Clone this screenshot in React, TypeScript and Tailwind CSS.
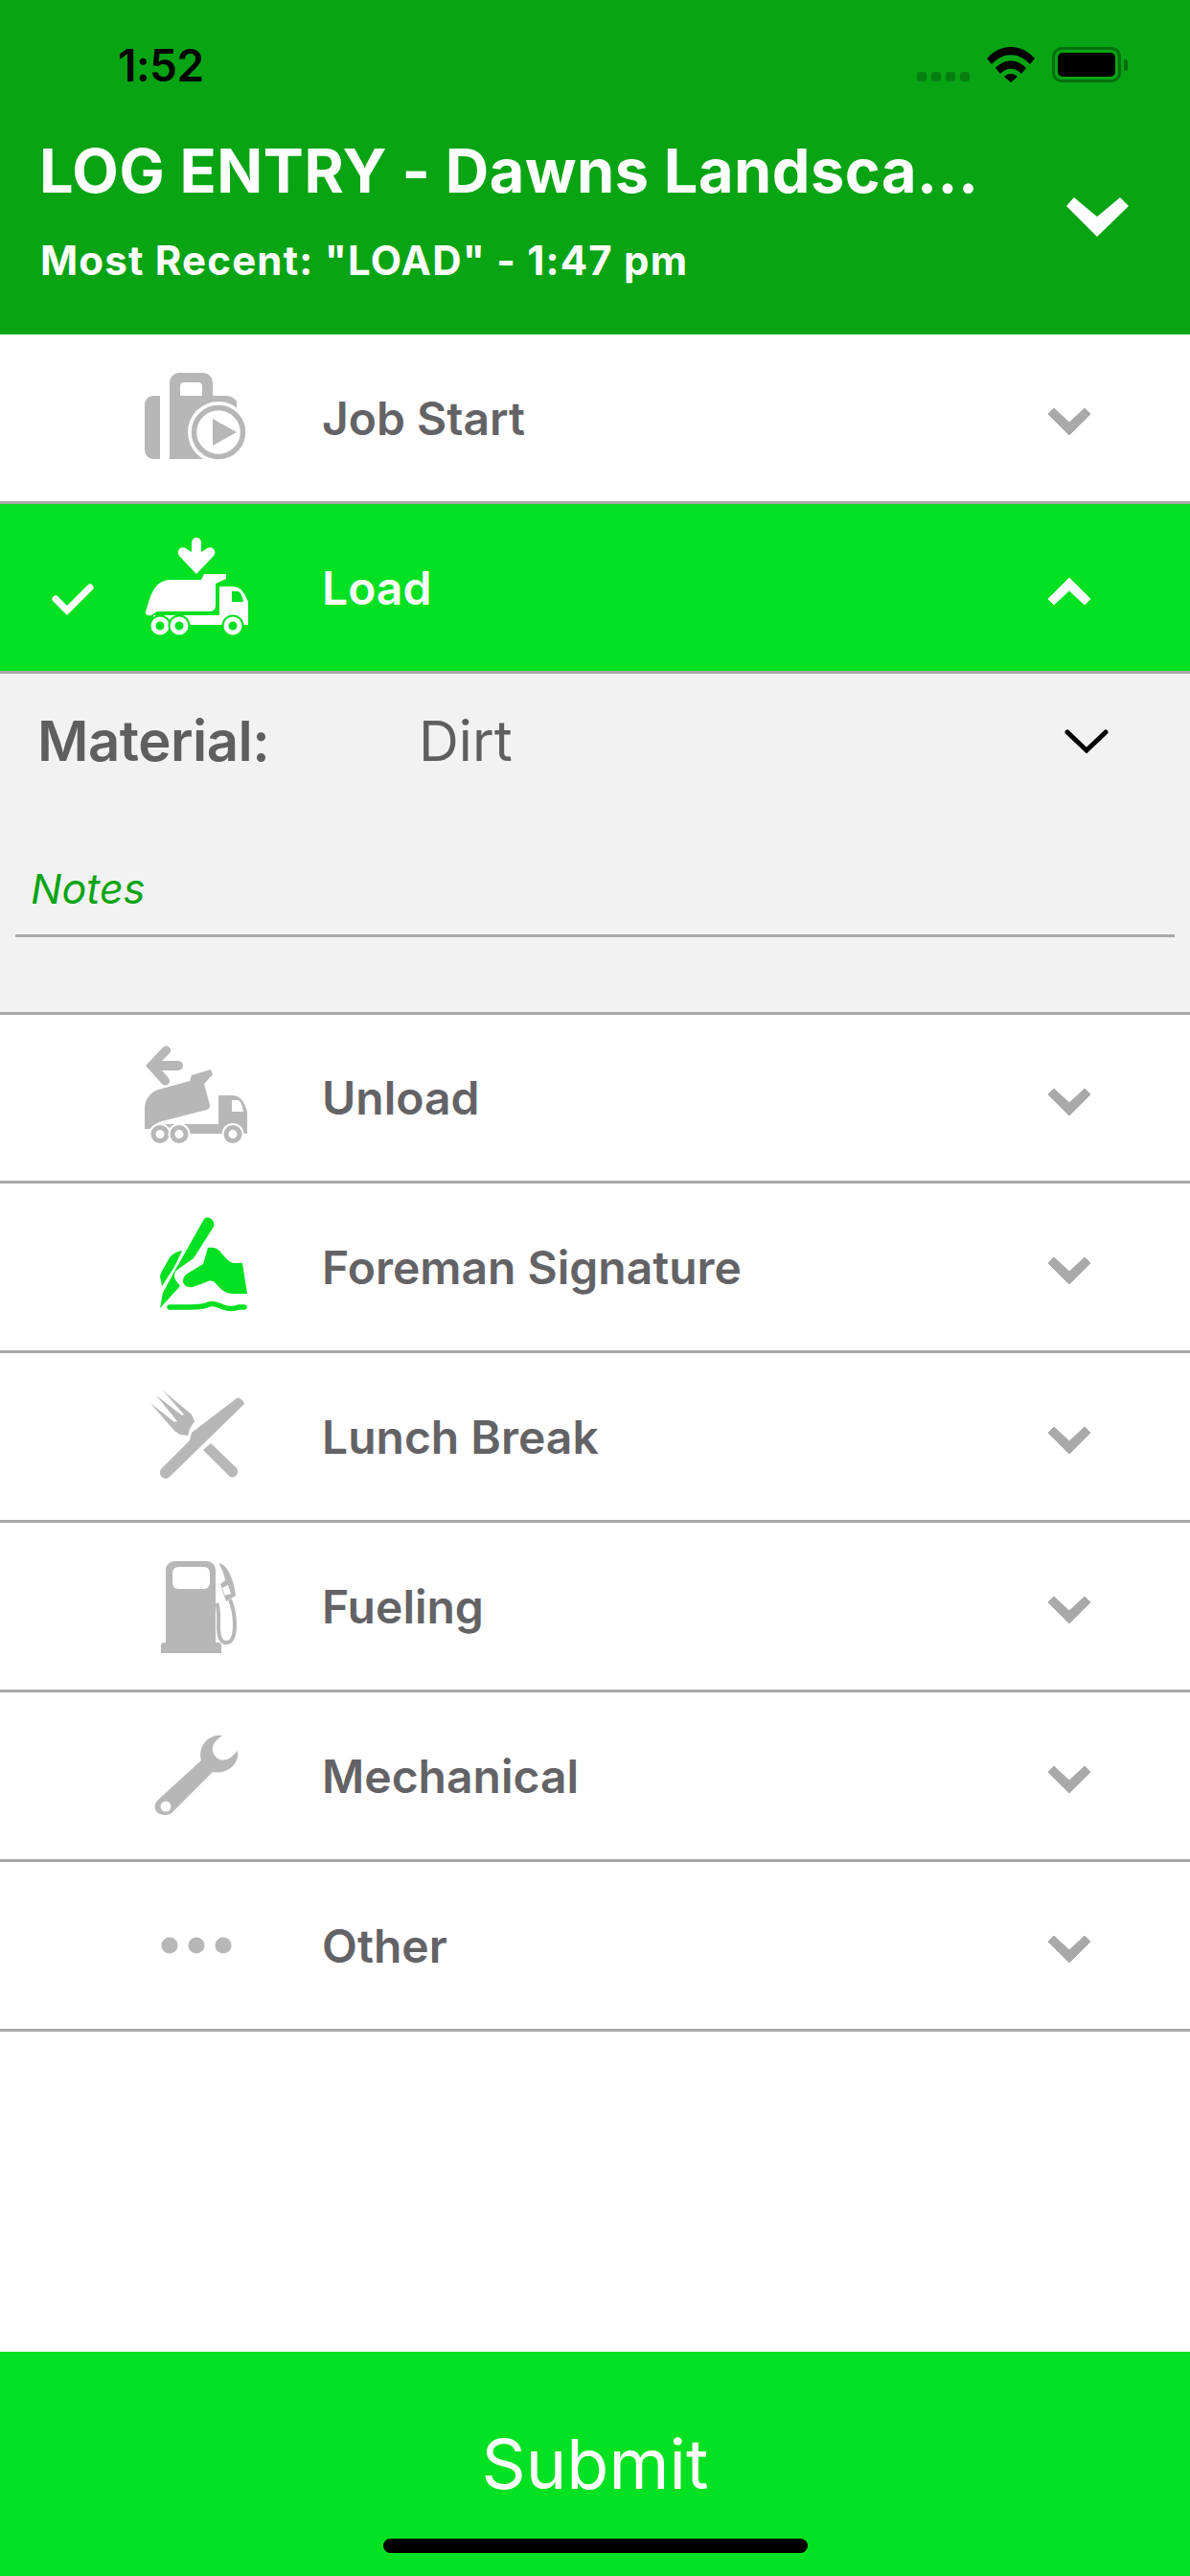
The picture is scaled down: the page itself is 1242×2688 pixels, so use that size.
const font = "font-['Inter','Noto_Sans',sans-serif]";

const GRAY = "#b7b7b7";
const GREEN = "#04e022";

type IconProps = { color?: string; cut?: string };

const Box = ({ children }: { children: React.ReactNode }) => (
  <svg viewBox="0 0 160 177" className="absolute left-[120px] top-0 h-[177px] w-[160px]">
    {children}
  </svg>
);

const JobIcon = () => (
  <Box>
    <path d="M40 64h7v66h-7a9 9 0 0 1-9-9V73a9 9 0 0 1 9-9z" fill={GRAY} />
    <path
      d="M57 130V50a10 10 0 0 1 10-10h25a10 10 0 0 1 10 10v14h14c6 0 9 3 11 6v40l-35 20z"
      fill={GRAY}
    />
    <path d="M68 64V54a4 4 0 0 1 4-4h15a4 4 0 0 1 4 4v10z" fill="#fff" />
    <circle cx="108" cy="102" r="32" fill="#fff" />
    <path d="M127 70l10 32h10V60z" fill="#fff" />
    <circle cx="108" cy="102" r="25.500" fill="none" stroke={GRAY} strokeWidth="5.500" />
    <path d="M102 88l25 14-25 14z" fill={GRAY} />
  </Box>
);

const Wheels = ({ y, color, cut }: { y: number; color: string; cut: string }) => (
  <>
    {[47, 67, 123].map((x) => (
      <g key={x}>
        <circle cx={x} cy={y} r="11.500" fill={cut} />
        <circle cx={x} cy={y} r="7" fill="none" stroke={color} strokeWidth="5" />
      </g>
    ))}
  </>
);

const LoadIcon = ({ color = "#fff", cut = GREEN }: IconProps) => (
  <Box>
    <path
      d="M80 40a5 5 0 0 1 10 0v10l5-3a5 5 0 0 1 8 7L85 73 67 54a5 5 0 0 1 8-7l5 3z"
      fill={color}
    />
    <path
      d="M32 113c4-14 8-34 26-34h32l3-6h23v5l-11 5v23c0 3-2 6-6 6H46c-3 0-5 2-8 4-3 1-7-1-6-3z"
      fill={color}
    />
    <path d="M109 86h14c8 0 12 6 16 16v24H40v-10h69z" fill={color} />
    <path d="M122 91h6c3 0 5 5 6 11h-12z" fill={cut} />
    <Wheels y={127} color={color} cut={cut} />
  </Box>
);

const UnloadIcon = ({ color = GRAY, cut = "#fff" }: IconProps) => (
  <Box>
    <path
      d="M32 53l18-19a4.500 4.500 0 0 1 7 6l-8 8h17a5 5 0 0 1 0 10H49l7 8a4.500 4.500 0 0 1-7 6z"
      fill={color}
    />
    <path
      d="M31 119V98c0-10 6-17 14-20l33-9 2-6 20-6 2 5-9 10 6 22c0 3-1 4-3 5L49 111c-5 1-8 4-12 8z"
      fill={color}
    />
    <path d="M108 84h14c8 0 13 6 16 17v23H42v-4c0-4 3-6 8-6h58z" fill={color} />
    <path d="M122 89h6c3 0 5 6 6 12h-12z" fill={cut} />
    <Wheels y={124.500} color={color} cut={cut} />
  </Box>
);

const SignatureIcon = () => (
  <Box>
    <path d="M70 70c-6 1-12 4-15 11-4 7-8 13-8 16l2 10 13-20z" fill={GREEN} />
    <path
      d="M97 67c5-1 9 0 12 3 5 6 10 13 16 13h8l5 32h-15c-8 0-13-5-18-11-3-3-6-3-10-1l-14 5c-5 1-10-2-10-6 0-4 2-7 6-9l15-9z"
      fill={GREEN}
    />
    <path
      d="M93 37c4-4 12 1 10 8L82 78 65 90c-4 3-4 9 0 13l3 4-21 23 3-16 13-24z"
      fill={GREEN}
      stroke="#fff"
      strokeWidth="2.500"
      paintOrder="stroke"
    />
    <path
      d="M57 129h21c8 0 14 0 20-3 6-2 10 1 15 3 6 2 11 2 16 0h6"
      fill="none"
      stroke={GREEN}
      strokeWidth="5.500"
      strokeLinecap="round"
    />
  </Box>
);

const LunchIcon = () => (
  <Box>
    <path
      d="M127 47c3-1 7 2 8 6L57 129c-3 3-7 2-9-1-2-3-1-6 1-8l29-29 2-8z"
      fill={GRAY}
    />
    <path d="M92 101l8-7 27 26c2 3 1 6-1 8-2 2-5 2-7 0z" fill={GRAY} />
    <path
      d="M50 39l30 25 3 7-5 8-2 7-8-1-6-4-25-29 25 20 3-1-22-27 27 21 2-1z"
      fill={GRAY}
    />
  </Box>
);

const FuelIcon = () => (
  <Box>
    <path
      d="M62 40h34a9 9 0 0 1 9 9v76h3a3 3 0 0 1 3 3v8H48v-8a3 3 0 0 1 3-3h2V49a9 9 0 0 1 9-9z"
      fill={GRAY}
    />
    <rect x="60" y="46" width="39" height="23" rx="6" fill="#fff" />
    <path
      d="M106 84c3 6 2 14 2 24 0 8 1 17 8 17 7 0 9-8 9-19 0-9-2-18-5-26"
      fill="none"
      stroke={GRAY}
      strokeWidth="4"
    />
    <path d="M110 42c8 4 14 17 16 34l-10 6-6-18 5-4c-1-7-4-13-6-16z" fill={GRAY} />
    <path d="M112 68l6-3 3 9-6 2z" fill="#fff" />
  </Box>
);

const WrenchIcon = () => (
  <Box>
    <path
      d="M112 45c-14-2-26 11-22 26L45 112c-5 5-4 11 0 14 4 2 9 3 14 0l43-43c15 3 28-8 26-22l-6 6c-7 6-16 4-19-3-3-6-1-12 9-19z"
      fill={GRAY}
    />
    <circle cx="53" cy="119" r="5.500" fill="#fff" />
  </Box>
);

const DotsIcon = () => (
  <Box>
    <circle cx="57" cy="87" r="8.500" fill={GRAY} />
    <circle cx="85" cy="87" r="8.500" fill={GRAY} />
    <circle cx="113" cy="87" r="8.500" fill={GRAY} />
  </Box>
);

const Chevron = ({ up, color }: { up?: boolean; color: string }) => (
  <svg viewBox="0 0 46 30" className="mt-[8px] h-[30px] w-[46px]">
    <path
      d={up ? "M23 1 L45 23 L39 29 L23 14 L7 29 L1 23 Z" : "M1 7 L7 1 L23 16 L39 1 L45 7 L23 29 Z"}
      fill={color}
      stroke={color}
      strokeWidth="1"
      strokeLinejoin="round"
    />
  </svg>
);

const Row = ({
  label,
  icon,
  active,
  short,
}: {
  label: string;
  icon: React.ReactNode;
  active?: boolean;
  short?: boolean;
}) => (
  <div
    className={`relative flex items-center border-b-[3px] border-[#a8a8a8] pl-[336px] pr-[103px] ${
      short ? "h-[176px]" : "h-[177px]"
    } ${active ? "bg-[#04e022]" : "bg-white"}`}
  >
    {active && (
      <svg viewBox="0 0 44 34" className="absolute left-[54px] top-[82px] h-[34px] w-[44px]">
        <path d="M4 17 L16 29 L40 5" fill="none" stroke="#fff" strokeWidth="7" strokeLinecap="round" />
      </svg>
    )}
    {icon}
    <span
      className={`flex-1 pt-[1px] text-[48px] font-semibold leading-none ${
        active ? "text-white" : "text-[#636366]"
      }`}
    >
      {label}
    </span>
    <Chevron up={active} color={active ? "#fff" : "#a9a9a9"} />
  </div>
);

export default function App() {
  return (
    <div className={`flex h-[2688px] w-[1242px] flex-col overflow-hidden bg-white ${font}`}>
      {/* status bar + header */}
      <header className="relative h-[349px] bg-[#08a414]">
        <div className="flex h-[142px] items-start justify-between pl-[123px] pr-[65px] pt-[40px]">
          <span className="text-[46px] font-semibold leading-[56px] tracking-[-0.5px] text-black">1:52</span>
          <div className="flex items-start pt-[9px]">
            <div className="mr-[18px] mt-[26px] flex gap-[5px]">
              {[0, 1, 2, 3].map((i) => (
                <span key={i} className="h-[10px] w-[10px] rounded-[3px] bg-[#067f10]" />
              ))}
            </div>
            <svg viewBox="0 0 50 37" className="mr-[18px] h-[37px] w-[50px]">
              <path d="M0 12C14-4 36-4 50 12l-5 6C33 5 17 5 5 18z" fill="#000" />
              <path d="M9 22c9-10 23-10 32 0l-5 6c-6-7-16-7-22 0z" fill="#000" />
              <path d="M18 31c4-4 10-4 14 0l-7 6z" fill="#000" />
            </svg>
            <div className="flex items-center">
              <div className="h-[37px] w-[72px] rounded-[10px] border-[3px] border-[#056e0e] p-[3px]">
                <div className="h-full w-full rounded-[5px] bg-black" />
              </div>
              <span className="ml-[3px] h-[12px] w-[4px] rounded-r-[3px] bg-[#056e0e]" />
            </div>
          </div>
        </div>
        <div className="pl-[41px]">
          <div className="text-[63px] font-bold leading-[72px] tracking-[0.5px] text-white">
            LOG ENTRY - Dawns Landsca...
          </div>
          <div className="ml-[1px] mt-[35px] text-[42px] font-bold leading-[46px] tracking-[1.2px] text-white">
            Most Recent: "LOAD" - 1:47 pm
          </div>
        </div>
        <svg viewBox="0 0 65 41" className="absolute left-[1113px] top-[206px] h-[41px] w-[65px]">
          <path d="M1 9 L8 1 L32 21 L56 1 L64 9 L32 40 Z" fill="#fff" stroke="#fff" strokeWidth="1.500" strokeLinejoin="round" />
        </svg>
      </header>

      <Row label="Job Start" icon={<JobIcon />} />
      <Row label="Load" icon={<LoadIcon />} active />

      {/* expanded panel */}
      <section className="flex h-[356px] flex-col border-b-[3px] border-[#a8a8a8] bg-[#f2f2f2]">
        <div className="flex h-[145px] items-center pb-[6px] pl-[39px] pr-[85px] text-[58px] leading-none text-[#5f5f5f]">
          <span className="w-[398px] font-semibold tracking-[-0.5px]">Material:</span>
          <span className="flex-1">Dirt</span>
          <svg viewBox="0 0 46 26" className="h-[26px] w-[46px]">
            <path d="M3 4 L23 23 L43 4" fill="none" stroke="#000" strokeWidth="5" strokeLinecap="round" />
          </svg>
        </div>
        <div className="mx-[16px] flex h-[130px] items-start border-b-[3px] border-[#a8a8a8] pl-[16px] pt-[56px]">
          <span className="text-[43px] italic leading-[46px] text-[#08a414]">Notes</span>
        </div>
      </section>

      <Row label="Unload" icon={<UnloadIcon />} short />
      <Row label="Foreman Signature" icon={<SignatureIcon />} />
      <Row label="Lunch Break" icon={<LunchIcon />} />
      <Row label="Fueling" icon={<FuelIcon />} />
      <Row label="Mechanical" icon={<WrenchIcon />} />
      <Row label="Other" icon={<DotsIcon />} />

      <div className="flex-1" />

      <footer className="relative flex h-[234px] justify-center bg-[#04e022] pt-[73px]">
        <span className="text-[72px] leading-[88px] text-white">Submit</span>
        <div className="absolute bottom-[24px] left-[400px] h-[15px] w-[443px] rounded-full bg-black" />
      </footer>
    </div>
  );
}
